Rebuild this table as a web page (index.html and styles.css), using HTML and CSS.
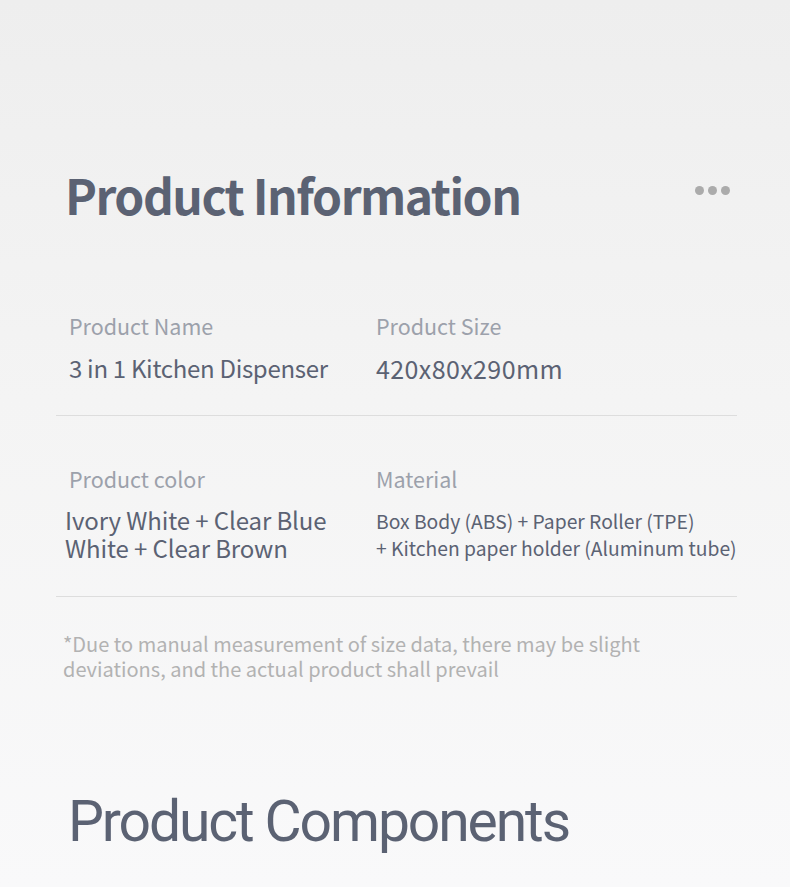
FILE: index.html
```html
<!DOCTYPE html>
<html lang="en">
<head>
<meta charset="utf-8">
<link rel="stylesheet" href="styles.css">
</head>
<body>
<div class="page">
  <header class="head">
    <h1 class="title">Product Information</h1>
    <div class="dots"><span></span><span></span><span></span></div>
  </header>
  <section class="row row-1">
    <div class="cell cell-left">
      <div class="label">Product Name</div>
      <div class="value">3 in 1 Kitchen Dispenser</div>
    </div>
    <div class="cell cell-right">
      <div class="label">Product Size</div>
      <div class="value value-size">420x80x290mm</div>
    </div>
  </section>
  <section class="row row-2">
    <div class="cell cell-left">
      <div class="label">Product color</div>
      <div class="value value-big">
        <div class="line">Ivory White + Clear Blue</div>
        <div class="line">White + Clear Brown</div>
      </div>
    </div>
    <div class="cell cell-right">
      <div class="label">Material</div>
      <div class="value value-small">
        <div class="line">Box Body (ABS) + Paper Roller (TPE)</div>
        <div class="line">+ Kitchen paper holder (Aluminum tube)</div>
      </div>
    </div>
  </section>
  <div class="note">
    <p class="line">*Due to manual measurement of size data, there may be slight</p>
    <p class="line">deviations, and the actual product shall prevail</p>
  </div>
  <h2 class="sub">Product Components</h2>
</div>
</body>
</html>
```
FILE: styles.css
```css
html, body { margin: 0; padding: 0; }
body {
  width: 790px;
  height: 887px;
  overflow: hidden;
  background: linear-gradient(180deg, #eeeeee 0%, #f4f4f4 45%, #f9f9fa 100%);
  font-family: "Noto Sans CJK SC", "Noto Sans", sans-serif;
}
.page { padding: 0 53px 0 56px; }
.head {
  display: flex;
  justify-content: space-between;
  align-items: flex-start;
  padding-top: 164px;
}
.title {
  margin: 0 0 0 9px;
  font-family: "Noto Sans CJK SC", "Open Sans", sans-serif;
  font-weight: 700;
  font-size: 48px;
  line-height: 60px;
  letter-spacing: -1.5px;
  color: #5b6273;
}
.dots { display: flex; gap: 4px; margin-top: 22px; margin-right: 7px; }
.dots span { width: 9px; height: 9px; border-radius: 50%; background: #ababab; }
.row {
  display: grid;
  grid-template-columns: 320px 1fr;
  border-bottom: 1px solid #dddddd;
}
.row-1 { margin-top: 88px; padding-bottom: 32px; }
.row-2 { margin-top: 49px; padding-bottom: 34px; }
.cell-left { padding-left: 13px; }
.label {
  font-size: 21.5px;
  line-height: 28px;
  color: #9ca1ab;
}
.value {
  margin-top: 13px;
  font-size: 24px;
  line-height: 30px;
  color: #5b6273;
  white-space: nowrap;
  letter-spacing: -0.3px;
}
.value-size { font-size: 25px; letter-spacing: 0.4px; }
.value-big { margin-left: -4px; line-height: 28px; letter-spacing: -0.1px; }
.value-small { font-size: 19.3px; line-height: 27px; letter-spacing: 0; margin-top: 15px; }
.line { margin: 0; }
.note {
  margin: 34px 0 0 7px;
  font-size: 20px;
  line-height: 25px;
  color: #b2b2b2;
}
.sub {
  margin: 109px 0 0 12px;
  font-family: Roboto, sans-serif;
  font-weight: 400;
  font-size: 57px;
  line-height: 64px;
  color: #5b6273;
  letter-spacing: -2.1px;
}
```
